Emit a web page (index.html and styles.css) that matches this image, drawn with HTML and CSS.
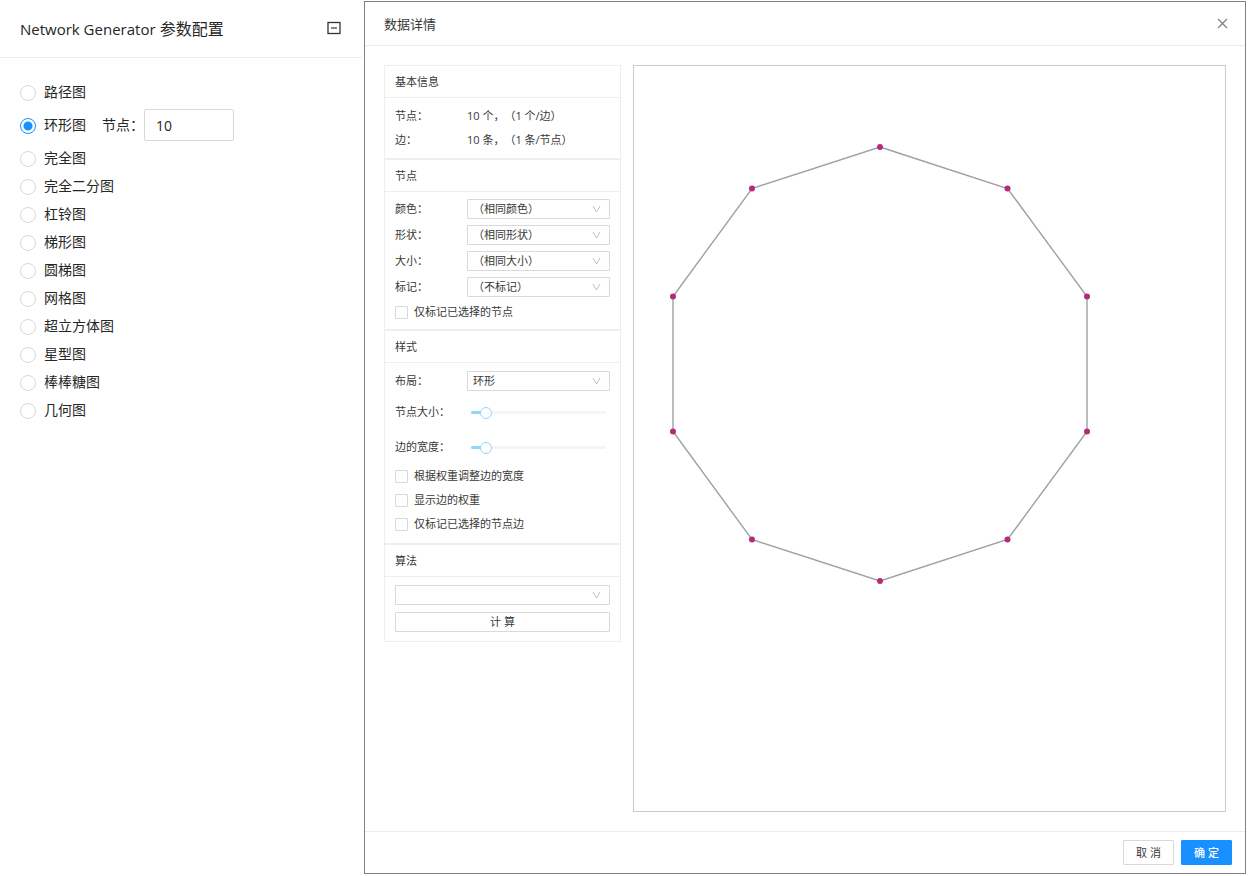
FILE: index.html
```
<!DOCTYPE html>
<html lang="zh-CN">
<head>
<meta charset="utf-8">
<meta name="viewport" content="width=device-width, initial-scale=1">
<title>Network Generator</title>
<link rel="stylesheet" href="styles.css">
</head>
<body>
<div class="page">
  <aside class="config">
    <header class="config-header">
      <h1 class="config-title"><span class="config-name">Network Generator</span> 参数配置</h1>
      <button class="icon-button" type="button" aria-label="收起">
        <svg width="14" height="16" viewBox="0 0 14 16" fill="none"><rect x="1" y="1.500" width="12" height="11" stroke="#333" stroke-width="1.300"/><path d="M4 7h6" stroke="#666" stroke-width="1.600"/></svg>
      </button>
    </header>
    <form class="radio-list">
      <label class="radio-row"><input class="radio" type="radio" name="graph">路径图</label>
      <div class="radio-row radio-row-active">
        <label class="radio-label"><input class="radio" type="radio" name="graph" checked>环形图</label>
        <label class="count-label" for="count">节点：</label>
        <input class="count-input" id="count" type="text" value="10">
      </div>
      <label class="radio-row"><input class="radio" type="radio" name="graph">完全图</label>
      <label class="radio-row"><input class="radio" type="radio" name="graph">完全二分图</label>
      <label class="radio-row"><input class="radio" type="radio" name="graph">杠铃图</label>
      <label class="radio-row"><input class="radio" type="radio" name="graph">梯形图</label>
      <label class="radio-row"><input class="radio" type="radio" name="graph">圆梯图</label>
      <label class="radio-row"><input class="radio" type="radio" name="graph">网格图</label>
      <label class="radio-row"><input class="radio" type="radio" name="graph">超立方体图</label>
      <label class="radio-row"><input class="radio" type="radio" name="graph">星型图</label>
      <label class="radio-row"><input class="radio" type="radio" name="graph">棒棒糖图</label>
      <label class="radio-row"><input class="radio" type="radio" name="graph">几何图</label>
    </form>
  </aside>

  <main class="dialog">
    <header class="dialog-header">
      <h2 class="dialog-title">数据详情</h2>
      <button class="icon-button" type="button" aria-label="关闭">
        <svg width="11" height="11" viewBox="0 0 11 11" fill="none"><path d="M1 1l9 9M10 1l-9 9" stroke="#808080" stroke-width="1.2"/></svg>
      </button>
    </header>

    <div class="dialog-body">
      <div class="panels">
        <section class="panel">
          <h3 class="panel-title">基本信息</h3>
          <dl class="panel-body info">
            <div class="row row-info"><dt>节点：</dt><dd>10 个，（1 个/边）</dd></div>
            <div class="row row-info"><dt>边：</dt><dd>10 条，（1 条/节点）</dd></div>
          </dl>
        </section>

        <section class="panel">
          <h3 class="panel-title">节点</h3>
          <div class="panel-body">
            <div class="row"><label for="color">颜色：</label><span class="select-box"><select class="select" id="color"><option>（相同颜色）</option></select><svg class="arrow" width="9" height="8" viewBox="0 0 9 8"><path d="M1 1l3.500 6l3.500-6"/></svg></span></div>
            <div class="row"><label for="shape">形状：</label><span class="select-box"><select class="select" id="shape"><option>（相同形状）</option></select><svg class="arrow" width="9" height="8" viewBox="0 0 9 8"><path d="M1 1l3.500 6l3.500-6"/></svg></span></div>
            <div class="row"><label for="size">大小：</label><span class="select-box"><select class="select" id="size"><option>（相同大小）</option></select><svg class="arrow" width="9" height="8" viewBox="0 0 9 8"><path d="M1 1l3.500 6l3.500-6"/></svg></span></div>
            <div class="row"><label for="mark">标记：</label><span class="select-box"><select class="select" id="mark"><option>（不标记）</option></select><svg class="arrow" width="9" height="8" viewBox="0 0 9 8"><path d="M1 1l3.500 6l3.500-6"/></svg></span></div>
            <label class="check-row"><input class="check" type="checkbox">仅标记已选择的节点</label>
          </div>
        </section>

        <section class="panel">
          <h3 class="panel-title">样式</h3>
          <div class="panel-body style-body">
            <div class="row"><label for="layout">布局：</label><span class="select-box"><select class="select" id="layout"><option>环形</option></select><svg class="arrow" width="9" height="8" viewBox="0 0 9 8"><path d="M1 1l3.500 6l3.500-6"/></svg></span></div>
            <div class="row row-slider"><label for="node-size">节点大小：</label><input class="slider" id="node-size" type="range" min="0" max="100" value="7"></div>
            <div class="row row-slider"><label for="edge-width">边的宽度：</label><input class="slider" id="edge-width" type="range" min="0" max="100" value="7"></div>
            <label class="check-row"><input class="check" type="checkbox">根据权重调整边的宽度</label>
            <label class="check-row"><input class="check" type="checkbox">显示边的权重</label>
            <label class="check-row"><input class="check" type="checkbox">仅标记已选择的节点边</label>
          </div>
        </section>

        <section class="panel">
          <h3 class="panel-title">算法</h3>
          <div class="panel-body algorithm">
            <span class="select-box"><select class="select" aria-label="算法"><option></option></select><svg class="arrow" width="9" height="8" viewBox="0 0 9 8"><path d="M1 1l3.500 6l3.500-6"/></svg></span>
            <button class="compute" type="button">计 算</button>
          </div>
        </section>
      </div>

      <div class="graph">
        <svg class="graph-svg" viewBox="634 66 591 745" role="img" aria-label="环形图">
          <polygon points="880,147 1007.500,188.500 1087,296.500 1087,431.500 1007.500,539.500 880,581 752,539.500 673,431.500 673,296.500 752,188.500" fill="none" stroke="#a0a0a0" stroke-width="1.400"/>
          <g fill="#b52b79">
            <circle cx="880" cy="147" r="3"/><circle cx="1007.500" cy="188.500" r="3"/><circle cx="1087" cy="296.500" r="3"/><circle cx="1087" cy="431.500" r="3"/><circle cx="1007.500" cy="539.500" r="3"/><circle cx="880" cy="581" r="3"/><circle cx="752" cy="539.500" r="3"/><circle cx="673" cy="431.500" r="3"/><circle cx="673" cy="296.500" r="3"/><circle cx="752" cy="188.500" r="3"/>
          </g>
        </svg>
      </div>
    </div>

    <footer class="dialog-footer">
      <button class="btn" type="button">取 消</button>
      <button class="btn btn-primary" type="button">确 定</button>
    </footer>
  </main>
</div>
</body>
</html>
```
FILE: styles.css
```
* {
  box-sizing: border-box;
}

body {
  margin: 0;
  background: #fff;
  color: #262626;
  font: 14px/20px "Open Sans", "Noto Sans CJK SC", sans-serif;
  text-spacing-trim: space-all;
}

button,
input,
select {
  margin: 0;
  font: inherit;
  color: inherit;
}

h1,
h2,
h3,
dl,
dd {
  margin: 0;
  font-weight: 400;
}

.page {
  display: grid;
  grid-template-columns: 362px minmax(0, 1fr);
  gap: 2px;
  min-height: 100vh;
}

/* Generator settings */
.config-header {
  display: flex;
  align-items: center;
  justify-content: space-between;
  height: 58px;
  padding: 0 21px 0 20px;
  border-bottom: 1px solid #ececec;
}

.config-title {
  font-size: 16px;
}

.config-name {
  font-size: 15px;
  font-weight: 500;
}

.icon-button {
  display: flex;
  padding: 0;
  border: 0;
  background: none;
}

.radio-list {
  display: flex;
  flex-direction: column;
  padding: 20px;
}

.radio-row,
.radio-label {
  display: flex;
  align-items: center;
  gap: 8px;
  height: 28px;
}

.radio-row-active {
  height: 38px;
}

.count-label {
  margin-left: 8px;
  width: 34px;
  white-space: nowrap;
}

.count-input {
  width: 90px;
  height: 32px;
  padding: 0 11px;
  border: 1px solid #d9d9d9;
  border-radius: 2px;
}

.radio {
  appearance: none;
  width: 16px;
  height: 16px;
  margin-top: 2px;
  border: 1px solid #d9d9d9;
  border-radius: 50%;
}

.radio:checked {
  border-color: #1890ff;
  background: radial-gradient(circle, #1890ff 4px, #fff 5px);
}

/* Data dialog */
.dialog {
  display: flex;
  flex-direction: column;
  margin: 1px 2px 2px 0;
  border: 1px solid #808080;
  color: #383838;
  font-size: 11px;
}

.dialog-header {
  display: flex;
  align-items: center;
  justify-content: space-between;
  height: 44px;
  padding: 0 17px 0 19px;
  border-bottom: 1px solid #ececec;
}

.dialog-title {
  font-size: 13px;
}

.dialog-body {
  flex: 1;
  display: flex;
  gap: 12px;
  padding: 19px;
}

.panels {
  width: 237px;
  flex: none;
}

.panel {
  border: 1px solid #eee;
}

.panel-title {
  height: 32px;
  padding: 0 10px;
  border-bottom: 1px solid #eee;
  font-size: 11px;
  line-height: 31px;
}

.panel-body {
  padding: 4px 10px 5px;
}

.info {
  padding: 6px 10px;
}

.style-body {
  padding: 5px 10px 7px;
}

.row {
  display: grid;
  grid-template-columns: 72px minmax(0, 1fr);
  align-items: center;
  height: 26px;
}

.row-info {
  height: 24px;
}

.row-slider {
  height: 35px;
}

.row label {
  white-space: nowrap;
}

.select-box {
  display: grid;
  align-items: center;
}

.select {
  grid-area: 1 / 1;
  appearance: none;
  width: 100%;
  height: 20px;
  padding: 0 20px 0 5px;
  border: 1px solid #d9d9d9;
  border-radius: 1px;
  background: #fff;
  line-height: 18px;
}

.arrow {
  grid-area: 1 / 1;
  justify-self: end;
  margin-right: 9px;
  fill: none;
  stroke: #bfbfbf;
  pointer-events: none;
}

.check-row {
  display: flex;
  align-items: center;
  gap: 6px;
  height: 24px;
}

.check {
  appearance: none;
  width: 13px;
  height: 13px;
  border: 1px solid #d9d9d9;
  border-radius: 1px;
}

.check:checked {
  background: #1890ff;
}

.slider {
  appearance: none;
  width: auto;
  height: 12px;
  margin: 2px 4px 0;
  background: none;
}

.slider::-webkit-slider-runnable-track {
  height: 3px;
  border-radius: 2px;
  background: linear-gradient(to right, #91d5ff 12px, #f5f5f5 12px);
}

.slider::-webkit-slider-thumb {
  appearance: none;
  width: 12px;
  height: 12px;
  margin-top: -4px;
  border: 1px solid #91d5ff;
  border-radius: 50%;
  background: #fff;
}

.algorithm {
  display: grid;
  gap: 7px;
  padding: 8px 10px 9px;
}

.compute {
  height: 20px;
  padding: 0;
  border: 1px solid #d9d9d9;
  border-radius: 1px;
  background: #fff;
  line-height: 18px;
}

.graph {
  flex: 1;
  display: flex;
  min-width: 0;
  border: 1px solid #ccc;
}

.graph-svg {
  flex: 1;
  min-width: 0;
}

.dialog-footer {
  display: flex;
  justify-content: flex-end;
  gap: 7px;
  padding: 8px 13px;
  border-top: 1px solid #ececec;
}

.btn {
  width: 51px;
  height: 25px;
  padding: 0;
  border: 1px solid #d9d9d9;
  border-radius: 1px;
  background: #fff;
  font-size: 11px;
}

.btn-primary {
  border-color: #1890ff;
  background: #1890ff;
  color: #fff;
  font-weight: 500;
}
```
